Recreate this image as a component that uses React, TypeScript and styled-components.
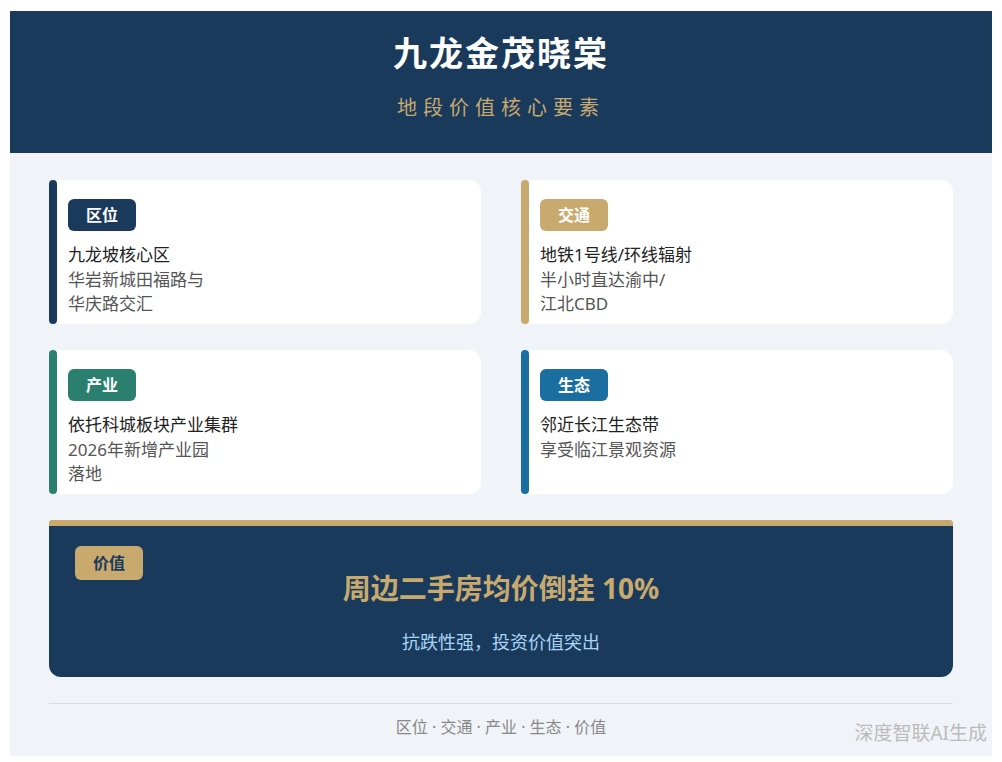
import { FC } from 'react';
import styled, { createGlobalStyle } from 'styled-components';

const navy = '#1a3a5c';
const gold = '#c8a96e';

const GlobalStyle = createGlobalStyle`
    html, body {
        margin: 0;
        padding: 0;
        background: #fff;
        font-family: 'Noto Sans', 'Noto Sans CJK SC', sans-serif;
    }
`;

const Page = styled.div`
    position: relative;
    box-sizing: border-box;
    width: 982px;
    height: 745px;
    margin: 11px 0 0 10px;
    background: #f0f4f8;
    overflow: hidden;
`;

const Header = styled.header`
    box-sizing: border-box;
    height: 142px;
    padding-top: 20px;
    background: ${navy};
    text-align: center;
`;

const Title = styled.h1`
    margin: 0;
    font-size: 34px;
    line-height: 44px;
    font-weight: 700;
    letter-spacing: 2px;
    color: #fff;
`;

const Subtitle = styled.p`
    margin: 18px 0 0;
    font-size: 20px;
    line-height: 30px;
    letter-spacing: 6px;
    color: ${gold};
`;

const Main = styled.main`
    padding: 27px 39px 0;
`;

const Grid = styled.section`
    display: grid;
    grid-template-columns: 432px 432px;
    grid-auto-rows: 144px;
    column-gap: 40px;
    row-gap: 26px;
`;

const Card = styled.article`
    display: flex;
    background: #fff;
    border-radius: 12px;
`;

const Stripe = styled.div<{ $color: string }>`
    flex: none;
    width: 8px;
    border-radius: 4px;
    background: ${({ $color }) => $color};
`;

const CardBody = styled.div`
    padding: 19px 11px 0;
`;

const Badge = styled.span<{ $bg: string; $fg?: string }>`
    display: block;
    box-sizing: border-box;
    width: 68px;
    height: 32px;
    border-radius: 6px;
    font-size: 16px;
    line-height: 32px;
    font-weight: 700;
    text-align: center;
    background: ${({ $bg }) => $bg};
    color: ${({ $fg }) => $fg ?? '#fff'};
`;

const Lead = styled.div`
    margin-top: 11px;
    font-size: 17px;
    line-height: 26px;
    color: #222;
`;

const Detail = styled.div`
    font-size: 17px;
    line-height: 24px;
    color: #555;
`;

const Value = styled.section`
    position: relative;
    height: 157px;
    margin-top: 26px;
    text-align: center;
`;

const ValueBar = styled.div`
    height: 6px;
    border-radius: 3px 3px 0 0;
    background: ${gold};
`;

const ValueBody = styled.div`
    box-sizing: border-box;
    height: 151px;
    padding-top: 42px;
    border-radius: 0 0 12px 12px;
    background: ${navy};
`;

const ValueBadge = styled(Badge)`
    position: absolute;
    top: 26px;
    left: 26px;
    height: 34px;
    line-height: 34px;
`;

const ValueTitle = styled.div`
    font-size: 28px;
    line-height: 40px;
    font-weight: 700;
    color: ${gold};
`;

const ValueNote = styled.div`
    margin-top: 20px;
    font-size: 18px;
    line-height: 28px;
    color: #a8d4f5;
`;

const Footer = styled.footer`
    margin-top: 26px;
    padding-top: 12px;
    border-top: 1px solid #d9dde0;
    font-size: 16px;
    line-height: 22px;
    text-align: center;
    color: #888;
`;

const Watermark = styled.div`
    position: absolute;
    right: 5px;
    bottom: 10px;
    font-size: 19px;
    line-height: 26px;
    color: #bbb;
`;

interface Item {
    tag: string;
    color: string;
    lead: string;
    details: string[];
}

const items: Item[] = [
    { tag: '区位', color: navy, lead: '九龙坡核心区', details: ['华岩新城田福路与', '华庆路交汇'] },
    { tag: '交通', color: gold, lead: '地铁1号线/环线辐射', details: ['半小时直达渝中/', '江北CBD'] },
    { tag: '产业', color: '#2a7f6f', lead: '依托科城板块产业集群', details: ['2026年新增产业园', '落地'] },
    { tag: '生态', color: '#1a6fa0', lead: '邻近长江生态带', details: ['享受临江景观资源'] },
];

const App: FC = () => (
    <>
        <GlobalStyle />
        <Page>
            <Header>
                <Title>九龙金茂晓棠</Title>
                <Subtitle>地段价值核心要素</Subtitle>
            </Header>
            <Main>
                <Grid>
                    {items.map((item) => (
                        <Card key={item.tag}>
                            <Stripe $color={item.color} />
                            <CardBody>
                                <Badge $bg={item.color}>{item.tag}</Badge>
                                <Lead>{item.lead}</Lead>
                                {item.details.map((line) => (
                                    <Detail key={line}>{line}</Detail>
                                ))}
                            </CardBody>
                        </Card>
                    ))}
                </Grid>
                <Value>
                    <ValueBar />
                    <ValueBody>
                        <ValueTitle>周边二手房均价倒挂 10%</ValueTitle>
                        <ValueNote>抗跌性强，投资价值突出</ValueNote>
                    </ValueBody>
                    <ValueBadge $bg={gold} $fg={navy}>价值</ValueBadge>
                </Value>
                <Footer>区位 · 交通 · 产业 · 生态 · 价值</Footer>
            </Main>
            <Watermark>深度智联AI生成</Watermark>
        </Page>
    </>
);

export default App;
